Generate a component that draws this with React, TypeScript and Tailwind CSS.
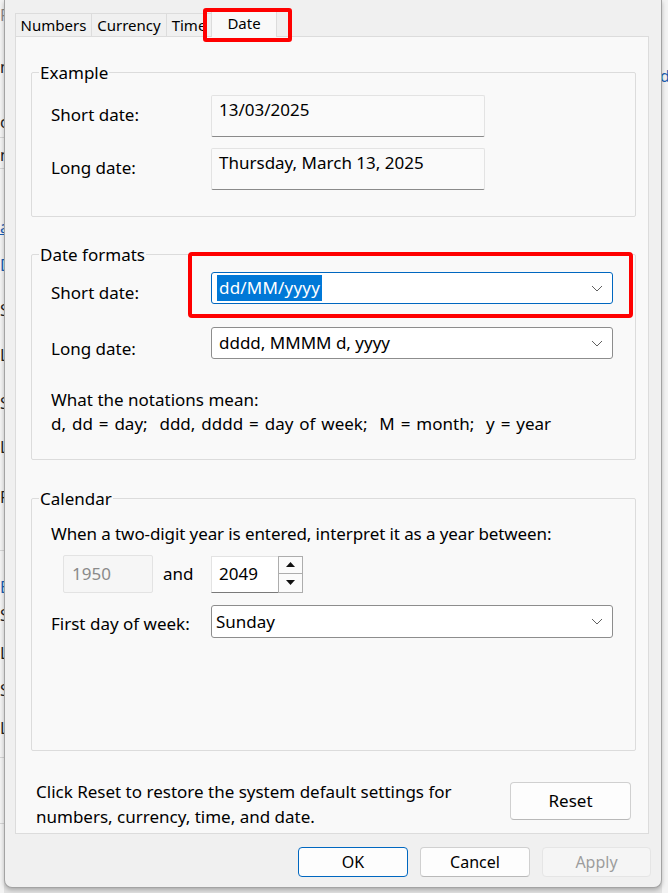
import React from "react";

const FONT = "font-['Noto_Sans','Segoe_UI',sans-serif]";

function Chevron() {
  return (
    <svg width="12" height="7" viewBox="0 0 12 7" className="shrink-0">
      <polyline points="1,1 6,6 11,1" fill="none" stroke="#606060" strokeWidth="1" />
    </svg>
  );
}

function Triangle({ up }: { up?: boolean }) {
  return (
    <svg width="9" height="5" viewBox="0 0 9 5">
      <polygon points={up ? "0,5 4.5,0 9,5" : "0,0 4.5,5 9,0"} fill="#111" />
    </svg>
  );
}

// background window peeking out on the left edge
function LeftStrip() {
  const rows: { mt: string; ch?: string; color?: string; line?: boolean }[] = [
    { mt: "mt-[5px]", ch: "F", color: "text-[#8a8a8a]" },
    { mt: "mt-[32px]", ch: "m" },
    { mt: "mt-[35px]", ch: "c" },
    { mt: "mt-[5px]", line: true },
    { mt: "mt-[7px]", ch: "n" },
    { mt: "mt-[3px]", line: true },
    { mt: "mt-[48px]", ch: "a", color: "text-[#1a5fb4] underline" },
    { mt: "mt-[18px]", ch: "D", color: "text-[#1a5fb4]" },
    { mt: "mt-[25px]", ch: "S" },
    { mt: "mt-[25px]", ch: "L" },
    { mt: "mt-[28px]", ch: "S" },
    { mt: "mt-[24px]", ch: "L" },
    { mt: "mt-[30px]", ch: "F" },
    { mt: "mt-[43px]", line: true },
    { mt: "mt-[26px]", ch: "E", color: "text-[#1a5fb4]" },
    { mt: "mt-[8px]", ch: "S" },
    { mt: "mt-[18px]", ch: "L" },
    { mt: "mt-[17px]", ch: "S" },
    { mt: "mt-[18px]", ch: "L" },
    { mt: "mt-[19px]", line: true },
    { mt: "mt-[65px]", line: true },
  ];
  return (
    <div className="w-[4px] h-[893px] shrink-0 overflow-hidden bg-[#f3f3f3] flex flex-col text-[16px]">
      {rows.map((r, i) =>
        r.line ? (
          <div key={i} className={`${r.mt} h-px w-full bg-[#d4d4d4]`} />
        ) : (
          <div key={i} className={`${r.mt} h-[20px] leading-[20px] ${r.color ?? "text-[#222]"}`}>
            {r.ch}
          </div>
        )
      )}
    </div>
  );
}

function RightStrip() {
  return (
    <div className="w-[6px] h-[893px] shrink-0 overflow-hidden bg-[#f3f3f3] flex flex-col">
      <div className="mt-[66px] -ml-[2px] text-[16px] leading-[20px] text-[#1a5fb4]">da</div>
    </div>
  );
}

function Group({
  legend,
  className,
  children,
}: {
  legend: string;
  className?: string;
  children: React.ReactNode;
}) {
  return (
    <div className={`relative border border-[#dcdcdc] rounded-[2px] ${className ?? ""}`}>
      <span className="absolute left-[7px] -top-[12px] px-[1px] bg-[#f9f9f9] leading-[24px]">
        {legend}
      </span>
      {children}
    </div>
  );
}

function ReadBox({ text }: { text: string }) {
  return (
    <div className="w-[274px] h-[42px] bg-[#fafafa] border border-[#e3e3e3] border-b-[#8a8a8a] rounded-[2px] pl-[7px] pt-[2px] leading-[24px]">
      {text}
    </div>
  );
}

function Combo({
  text,
  focused,
  pl = "pl-[7px]",
  h = "h-[32px]",
}: {
  text: string;
  focused?: boolean;
  pl?: string;
  h?: string;
}) {
  return (
    <div
      className={`w-[402px] ${h} flex items-center justify-between pr-[9px] bg-white rounded-[3px] border ${
        focused ? "border-[#0067c0] pl-[5px]" : `border-[#8d8d8d] ${pl}`
      }`}
    >
      {focused ? (
        <span className="bg-[#0078d7] text-white px-[2px] leading-[26px] tracking-[0.2px]">{text}</span>
      ) : (
        <span className="leading-[24px]">{text}</span>
      )}
      <Chevron />
    </div>
  );
}

function Button({
  label,
  kind = "normal",
  w = "w-[110px]",
  h = "h-[30px]",
  size = "text-[16px]",
}: {
  label: string;
  kind?: "default" | "normal" | "disabled";
  w?: string;
  h?: string;
  size?: string;
}) {
  const look =
    kind === "default"
      ? "border-[#0067c0] bg-[#fdfdfd] text-black"
      : kind === "disabled"
      ? "border-[#e5e5e5] bg-[#f5f5f5] text-[#9d9d9d]"
      : "border-[#d0d0d0] border-b-[#b9b9b9] bg-[#fdfdfd] text-black";
  return (
    <div className={`${w} ${h} border rounded-[4px] flex items-center justify-center ${size} ${look}`}>
      {label}
    </div>
  );
}

export default function App() {
  return (
    <div className={`flex w-[668px] h-[893px] overflow-hidden bg-[#e2e2e2] text-[17px] text-black ${FONT}`}>
      <LeftStrip />

      <div className="relative w-[658px] h-[888px] shrink-0 bg-[#f0f0f0] border-x border-b border-[#a3a3a3] rounded-b-[8px] shadow-[0_2px_4px_rgba(0,0,0,0.25)]">
        {/* tabs */}
        <div className="flex items-end h-[36px] pl-[10px] text-[15px]">
          <div className="w-[77px] h-[23px] border border-b-0 border-[#dcdcdc] flex items-center justify-center">
            Numbers
          </div>
          <div className="w-[76px] h-[23px] -ml-px border border-b-0 border-[#dcdcdc] flex items-center justify-center">
            Currency
          </div>
          <div className="w-[46px] h-[23px] -ml-px border border-b-0 border-[#dcdcdc] flex items-center justify-center">
            Time
          </div>
          <div className="relative z-10 w-[66px] h-[28px] -ml-px -mb-px bg-[#f9f9f9] border border-b-0 border-[#dcdcdc] flex items-center justify-center pb-[1px]">
            Date
          </div>
        </div>

        {/* tab page */}
        <div className="w-[634px] h-[798px] ml-[10px] border border-[#dcdcdc] bg-[#f9f9f9] pt-[35px] pl-[15px] pr-[12px] flex flex-col">
          <Group legend="Example" className="pt-[22px] pl-[19px] pb-[26px] flex flex-col gap-[11px]">
            <div className="flex items-start">
              <div className="w-[160px] pt-[8px] leading-[24px]">Short date:</div>
              <ReadBox text="13/03/2025" />
            </div>
            <div className="flex items-start">
              <div className="w-[160px] pt-[8px] leading-[24px]">Long date:</div>
              <ReadBox text="Thursday, March 13, 2025" />
            </div>
          </Group>

          <Group legend="Date formats" className="mt-[37px] pt-[17px] pl-[19px] pb-[23px] flex flex-col">
            <div className="flex items-start">
              <div className="w-[160px] pt-[9px] leading-[24px]">Short date:</div>
              <Combo text="dd/MM/yyyy" focused />
            </div>
            <div className="flex items-start mt-[22px]">
              <div className="w-[160px] pt-[10px] leading-[24px]">Long date:</div>
              <Combo text="dddd, MMMM d, yyyy" />
            </div>
            <div className="mt-[27px] leading-[24px]">
              <div>What the notations mean:</div>
              <div className="whitespace-pre [word-spacing:1.5px]">
                d, dd = day;  ddd, dddd = day of week;  M = month;  y = year
              </div>
            </div>
          </Group>

          <Group legend="Calendar" className="mt-[38px] pt-[23px] pl-[19px] pb-[112px] flex flex-col">
            <div className="leading-[24px] tracking-[-0.1px]">
              When a two-digit year is entered, interpret it as a year between:
            </div>
            <div className="flex items-center mt-[9px] h-[38px]">
              <div className="ml-[12px] w-[90px] h-[38px] bg-[#f6f6f6] border border-[#e3e3e3] rounded-[2px] flex items-center pl-[8px] text-[#8a8a8a]">
                1950
              </div>
              <div className="w-[58px] pl-[10px]">and</div>
              <div className="w-[92px] h-[37px] flex">
                <div className="flex-1 bg-white border border-[#e3e3e3] border-b-[#7a7a7a] border-r-0 flex items-center pl-[7px]">
                  2049
                </div>
                <div className="w-[25px] flex flex-col">
                  <div className="h-[18px] border border-[#adadad] bg-[#fbfbfb] flex items-center justify-center">
                    <Triangle up />
                  </div>
                  <div className="h-[19px] border border-t-0 border-[#adadad] bg-[#fbfbfb] flex items-center justify-center">
                    <Triangle />
                  </div>
                </div>
              </div>
            </div>
            <div className="flex items-start mt-[12px]">
              <div className="w-[160px] pt-[7px] leading-[24px]">First day of week:</div>
              <Combo text="Sunday" pl="pl-[4px]" h="h-[33px]" />
            </div>
          </Group>

          <div className="flex items-start justify-between mt-[28px] ml-[5px] mr-[5px]">
            <div className="leading-[25px]">
              <div>Click Reset to restore the system default settings for</div>
              <div>numbers, currency, time, and date.</div>
            </div>
            <div className="mt-[3px]">
              <Button label="Reset" w="w-[121px]" h="h-[38px]" size="text-[17px]" />
            </div>
          </div>
        </div>

        {/* dialog buttons */}
        <div className="flex justify-end gap-[12px] mt-[13px] pr-[10px]">
          <Button label="OK" kind="default" />
          <Button label="Cancel" />
          <Button label="Apply" kind="disabled" w="w-[109px]" />
        </div>

        {/* annotation boxes */}
        <div className="absolute left-[198px] top-[8px] w-[89px] h-[34px] border-[4px] border-[#ff0000] rounded-[3px] z-20" />
        <div className="absolute left-[183px] top-[252px] w-[445px] h-[66px] border-[4px] border-[#ff0000] rounded-[4px] z-20" />
      </div>

      <RightStrip />
    </div>
  );
}
